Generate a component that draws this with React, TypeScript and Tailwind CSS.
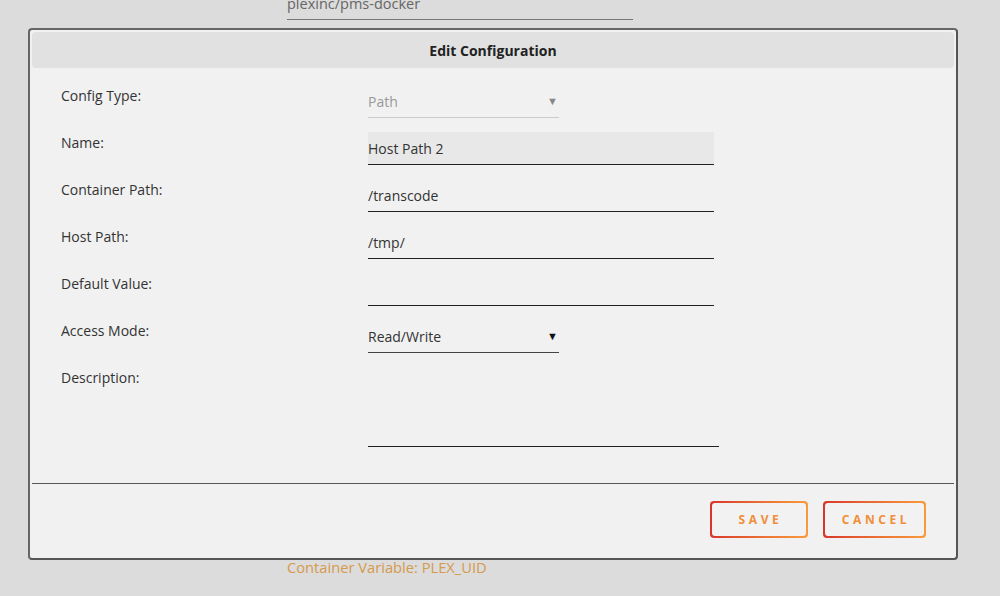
import React from "react";

// Gradient-outlined action button
function OutlineButton({ label, width }: { label: string; width: string }) {
  return (
    <div className={`rounded-[4px] bg-gradient-to-r from-[#d9342b] to-[#f89b3c] p-[2px] ${width} h-[37px]`}>
      <button className="w-full h-full rounded-[3px] bg-[#f2f2f2] text-[#f08e3a] text-[12px] font-bold tracking-[0.3em] pl-[3px]">
        {label}
      </button>
    </div>
  );
}

function Row({ label, children }: { label: string; children: React.ReactNode }) {
  return (
    <div className="flex items-start">
      <div className="w-[307px] pt-[1px] text-[14px] leading-[20px] text-[#333]">{label}</div>
      {children}
    </div>
  );
}

export default function App() {
  return (
    <div
      className="w-[1000px] h-[596px] bg-[#dcdcdc] relative overflow-hidden"
      style={{ fontFamily: '"Open Sans", "Noto Sans", sans-serif' }}
    >
      {/* field behind the dialog */}
      <div className="absolute left-[287px] top-[-6px] w-[346px] border-b border-[#777] pb-[5px] text-[14.5px] leading-[20px] text-[#666]">
        plexinc/pms-docker
      </div>

      <div className="absolute left-[28px] top-[28px] w-[930px] h-[532px] rounded-[4px] border-2 border-[#555] border-t-[#666] border-l-[#666] bg-[#f1f1f1] p-[2px] flex flex-col">
        <div className="h-[36px] rounded-[4px] bg-[#e1e1e1] flex items-center justify-center text-[14px] font-bold text-[#222]">
          Edit Configuration
        </div>

        <div className="flex flex-col gap-[14px] pl-[29px] pt-[17px]">
          <Row label="Config Type:">
            <div className="w-[191px] h-[33px] border-b border-[#ccc] flex items-center justify-between text-[14px] text-[#999]">
              <span>Path</span>
              <span className="text-[11px] pr-[1px] text-[#888]">▼</span>
            </div>
          </Row>
          <Row label="Name:">
            <div className="w-[346px] h-[33px] bg-[#e8e8e8] border-b border-[#222] flex items-center text-[14px] text-[#333]">
              Host Path 2
            </div>
          </Row>
          <Row label="Container Path:">
            <div className="w-[346px] h-[33px] border-b border-[#222] flex items-center text-[14px] text-[#333]">
              /transcode
            </div>
          </Row>
          <Row label="Host Path:">
            <div className="w-[346px] h-[33px] border-b border-[#222] flex items-center text-[14px] text-[#333]">
              /tmp/
            </div>
          </Row>
          <Row label="Default Value:">
            <div className="w-[346px] h-[33px] border-b border-[#222]" />
          </Row>
          <Row label="Access Mode:">
            <div className="w-[191px] h-[33px] border-b border-[#444] flex items-center justify-between text-[14px] text-[#333]">
              <span>Read/Write</span>
              <span className="text-[11px] pr-[1px] text-[#111]">▼</span>
            </div>
          </Row>
          <Row label="Description:">
            <div className="w-[351px] h-[80px] border-b border-[#222]" />
          </Row>
        </div>

        <div className="mt-[36px] border-t border-[#555]" />

        <div className="flex justify-end gap-[15px] pr-[28px] pt-[17px]">
          <OutlineButton label="SAVE" width="w-[98px]" />
          <OutlineButton label="CANCEL" width="w-[103px]" />
        </div>
      </div>

      <div className="absolute left-[287px] top-[557px] text-[14.7px] leading-[20px] text-[#d49a4e]">
        Container Variable: PLEX_UID
      </div>
    </div>
  );
}
